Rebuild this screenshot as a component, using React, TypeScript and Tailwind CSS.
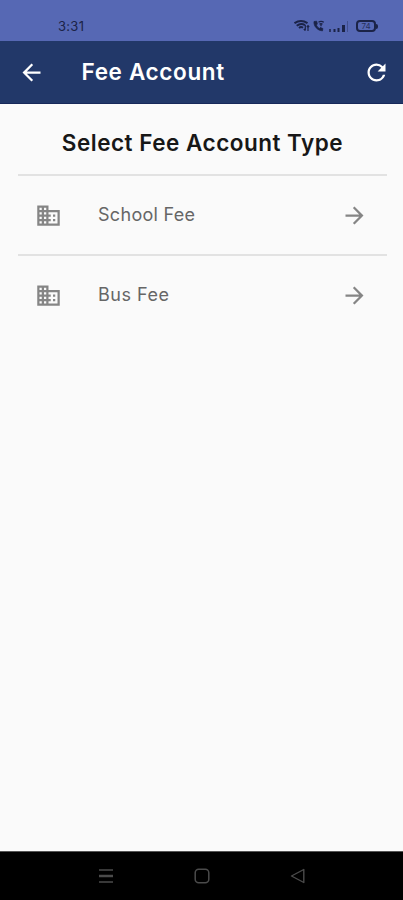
import { MdArrowBack, MdArrowForward, MdBusiness, MdRefresh } from "react-icons/md";

const accountTypes = [
  { id: "school", label: "School Fee", spacing: "tracking-[0.3px]" },
  { id: "bus", label: "Bus Fee", spacing: "tracking-[0.5px]" },
];

function StatusBar() {
  return (
    <div className="flex h-[41px] shrink-0 items-end justify-between bg-[#5668b4] pb-[7px] pl-[58px] pr-[26px] text-[#1b2347]">
      <span className="text-[13px] leading-4 tracking-[0.3px]">3:31</span>
      <div className="flex h-4 items-center">
        {/* Wifi */}
        <svg width="16" height="12" viewBox="0 0 16 12" fill="none" stroke="currentColor">
          <path d="M.5 3.200Q7-1 13.500 3.200M2.700 5.700Q7 2.500 11 5.200M5 8Q7 6.200 9 7.800" strokeWidth="2" />
          <path d="M11.300 5v5.500M9.800 9l1.500 1.700M14 11V6M12.800 7L14 5.700l1.200 1.300" strokeWidth="1.200" />
        </svg>
        {/* Wifi calling */}
        <svg className="ml-[2px]" width="13" height="12" viewBox="0 0 12 12" fill="none" stroke="currentColor">
          <path d="M1.500 1.500C1 6 5 10.700 10 10.800L10.300 8.500 7.800 7.500 6.800 8.500Q4.500 7 3.800 5L4.800 4 4.200 1.200Z" fill="currentColor" strokeWidth=".8" />
          <path d="M6 2.300Q8.500.5 11.300 2.300M7 4.200q1.500-1 3 0M8.500 4.500v1.700" strokeWidth="1.300" />
        </svg>
        {/* Signal */}
        <svg className="ml-1 mt-px" width="20" height="13" viewBox="0 0 20 13" fill="currentColor">
          <rect x="0" y="9" width="2" height="3" opacity=".75" />
          <rect x="4.500" y="9" width="2" height="3" />
          <rect x="8.500" y="8" width="2" height="4" />
          <rect x="13" y="5" width="3" height="7" />
          <rect x="18" y="1" width="1" height="11" opacity=".35" />
        </svg>
        {/* Battery */}
        <div className="relative ml-[7px] mr-px flex h-[12px] w-[20px] items-center justify-center rounded-[4px] border-2 border-current">
          <span className="text-[8px] leading-none opacity-80">74</span>
          <span className="absolute -right-[4px] top-[1.5px] h-[5px] w-[2px] rounded-r bg-current" />
        </div>
      </div>
    </div>
  );
}

function AppBar() {
  return (
    <header className="flex h-[63px] shrink-0 items-center border-b border-[#18295a] bg-[#223869] pl-[18px] pr-[13px] text-white">
      <button aria-label="Back">
        <MdArrowBack size={27} />
      </button>
      <h1 className="ml-[36.5px] flex-1 whitespace-nowrap text-[22.5px] font-semibold leading-7 tracking-[0.65px]">
        Fee Account
      </h1>
      <button aria-label="Refresh">
        <MdRefresh size={27} />
      </button>
    </header>
  );
}

function NavigationBar() {
  return (
    <nav className="grid h-[49px] shrink-0 grid-cols-[96px_96px_96px] items-center justify-center justify-items-center border-t border-[#555] bg-black text-[#4b4b4b]">
      <svg width="16" height="16" viewBox="0 0 16 16" stroke="currentColor">
        <path d="M1 2h14M1 14h14" strokeWidth="1.500" />
        <path d="M1 8h14" strokeWidth="2.500" />
      </svg>
      <svg width="16" height="16" viewBox="0 0 16 16" fill="none" stroke="currentColor" strokeWidth="1.500">
        <rect x="1.200" y="1.200" width="13.600" height="13.600" rx="3.500" />
      </svg>
      <svg width="16" height="16" viewBox="0 0 16 16" fill="none" stroke="currentColor" strokeWidth="1.400" strokeLinejoin="round">
        <path d="M1.500 8 13.800 1.500v13z" />
      </svg>
    </nav>
  );
}

export default function App() {
  return (
    <div className="flex h-[900px] w-full flex-col bg-[#fafafa] font-['Inter',sans-serif]">
      <StatusBar />
      <AppBar />
      <main className="flex-1 pl-[18px] pr-4">
        <h2 className="flex h-[70px] items-center justify-center whitespace-nowrap pt-2 text-[22.5px] font-semibold leading-7 tracking-[0.5px] text-[#171717]">
          Select Fee Account Type
        </h2>
        {accountTypes.map((type) => (
          <button
            key={type.id}
            className="flex h-20 w-full items-center border-t-2 border-[#e2e2e2] pl-[17px] pr-[19px] text-left"
          >
            <MdBusiness size={27} className="text-[#858585]" />
            <span className={`ml-9 flex-1 text-lg text-[#666] ${type.spacing}`}>
              {type.label}
            </span>
            <MdArrowForward size={27} className="text-[#858585]" />
          </button>
        ))}
      </main>
      <NavigationBar />
    </div>
  );
}
